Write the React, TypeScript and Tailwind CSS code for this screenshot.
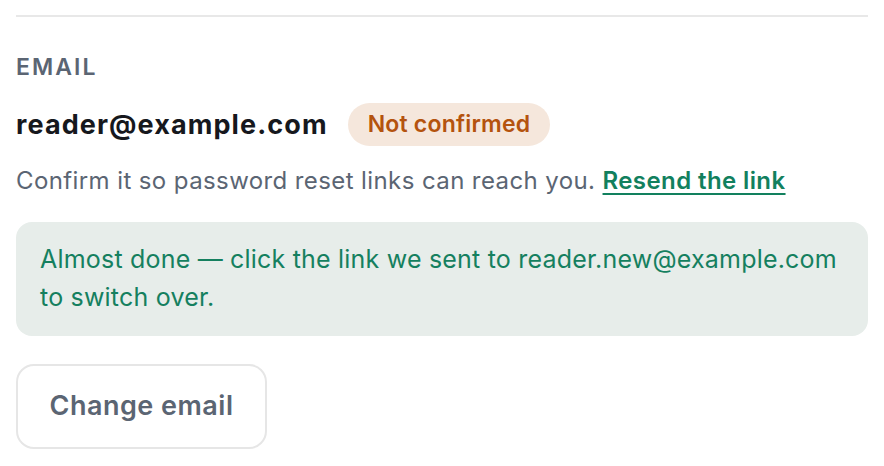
export default function App() {
  return (
    <div className="min-h-screen bg-white px-4 pt-[15px] font-['Inter',sans-serif]">
      {/* divider above the section */}
      <div className="h-[2px] bg-[#e8e8e8]" />

      <section className="mt-[36px]">
        <h3 className="text-[23px] leading-[28px] font-semibold uppercase tracking-[0.09em] text-[#5b6573]">
          Email
        </h3>

        <div className="mt-[22px] flex items-center gap-5">
          <span className="text-[27px] leading-[36px] font-bold tracking-[1.1px] text-[#16181d]">
            reader@example.com
          </span>
          <span className="flex h-[43px] items-center rounded-full bg-[#f5e7dc] px-5 text-[23px] font-semibold tracking-[0.2px] text-[#b4530e]">
            Not confirmed
          </span>
        </div>

        <p className="mt-[19px] text-[24px] leading-[32px] tracking-[0.4px] text-[#5b6573]">
          Confirm it so password reset links can reach you.{" "}
          <a
            href="#"
            className="font-semibold text-[#12805e] underline decoration-2 underline-offset-4"
          >
            Resend the link
          </a>
        </p>

        <div className="mt-[25px] rounded-2xl bg-[#e7edea] px-6 pt-[18px] pb-[20px] text-[25px] leading-[38px] tracking-[0.2px] text-[#15805f]">
          Almost done — click the link we sent to reader.new@example.com to switch over.
        </div>

        <button className="mt-[28px] h-[85px] w-[251px] rounded-[18px] border-2 border-[#e6e6e6] bg-white text-[27px] font-semibold tracking-[0.5px] text-[#5b6573]">
          Change email
        </button>
      </section>
    </div>
  );
}
